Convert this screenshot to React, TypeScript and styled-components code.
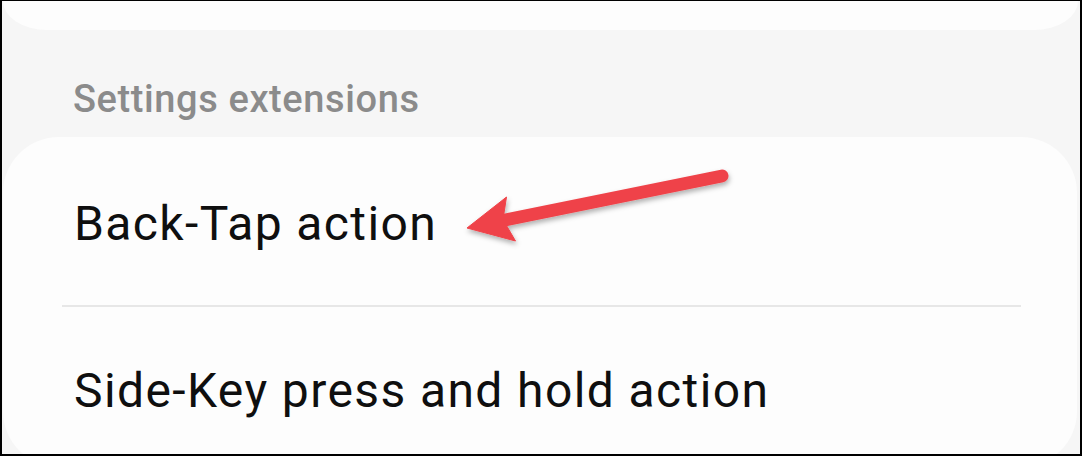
import React from "react";
import styled, { createGlobalStyle } from "styled-components";

const GlobalStyle = createGlobalStyle`
  html, body { margin: 0; padding: 0; background: #ffffff; }
  * { box-sizing: border-box; }
`;

const Frame = styled.div`
  position: relative;
  width: 1082px;
  height: 456px;
  overflow: hidden;
  background: #f6f6f6;
  border-style: solid;
  border-color: #000;
  border-width: 1px 2px 2px 2px;
  display: flex;
  flex-direction: column;
  font-family: Roboto, "Noto Sans", "Liberation Sans", sans-serif;
`;

const TopCard = styled.div`
  flex: none;
  height: 29px;
  margin: 0 2px 0 1px;
  background: #fdfdfd;
  border-radius: 0 0 44px 44px / 0 0 29px 29px;
`;

const SectionHeader = styled.div`
  flex: none;
  padding: 50px 0 19px 71px;
  font-size: 38px;
  line-height: 38px;
  letter-spacing: 0.6px;
  font-weight: 500;
  color: #8b8b8b;
`;

const Card = styled.div`
  flex: none;
  margin: 0 3px 0 1px;
  height: 330px;
  background: #fdfdfd;
  border-radius: 56px;
  display: flex;
  flex-direction: column;
`;

const Row = styled.div<{ $height: number; $top: number }>`
  flex: none;
  height: ${(p) => p.$height}px;
  padding: ${(p) => p.$top}px 0 0 71px;
  display: flex;
  align-items: center;
  font-size: 48px;
  line-height: 48px;
  letter-spacing: 1.4px;
  color: #0f0f0f;
`;

const Divider = styled.div`
  flex: none;
  height: 2px;
  margin: 0 56px 0 59px;
  background: #e7e7e7;
`;

const Overlay = styled.svg`
  position: absolute;
  left: -2px;
  top: -1px;
  width: 1082px;
  height: 456px;
  pointer-events: none;
`;

export default function App() {
  return (
    <>
      <GlobalStyle />
      <Frame>
        <TopCard />
        <SectionHeader>Settings extensions</SectionHeader>
        <Card>
          <Row $height={168} $top={6}>Back-Tap action</Row>
          <Divider />
          <Row $height={152} $top={15}>Side-Key press and hold action</Row>
        </Card>
        <Overlay viewBox="0 0 1082 456">
          <defs>
            <filter id="sh" x="-20%" y="-50%" width="140%" height="200%">
              <feDropShadow dx="1" dy="3" stdDeviation="2.5" floodColor="#000" floodOpacity="0.3" />
            </filter>
          </defs>
          <g filter="url(#sh)" fill="#ef4349" stroke="#ef4349">
            <line x1="722" y1="176" x2="505" y2="220" strokeWidth="13" strokeLinecap="round" />
            <polygon points="467,228 506.5,197 503,219.5 515.5,241" strokeWidth="1" strokeLinejoin="round" />
          </g>
        </Overlay>
      </Frame>
    </>
  );
}
